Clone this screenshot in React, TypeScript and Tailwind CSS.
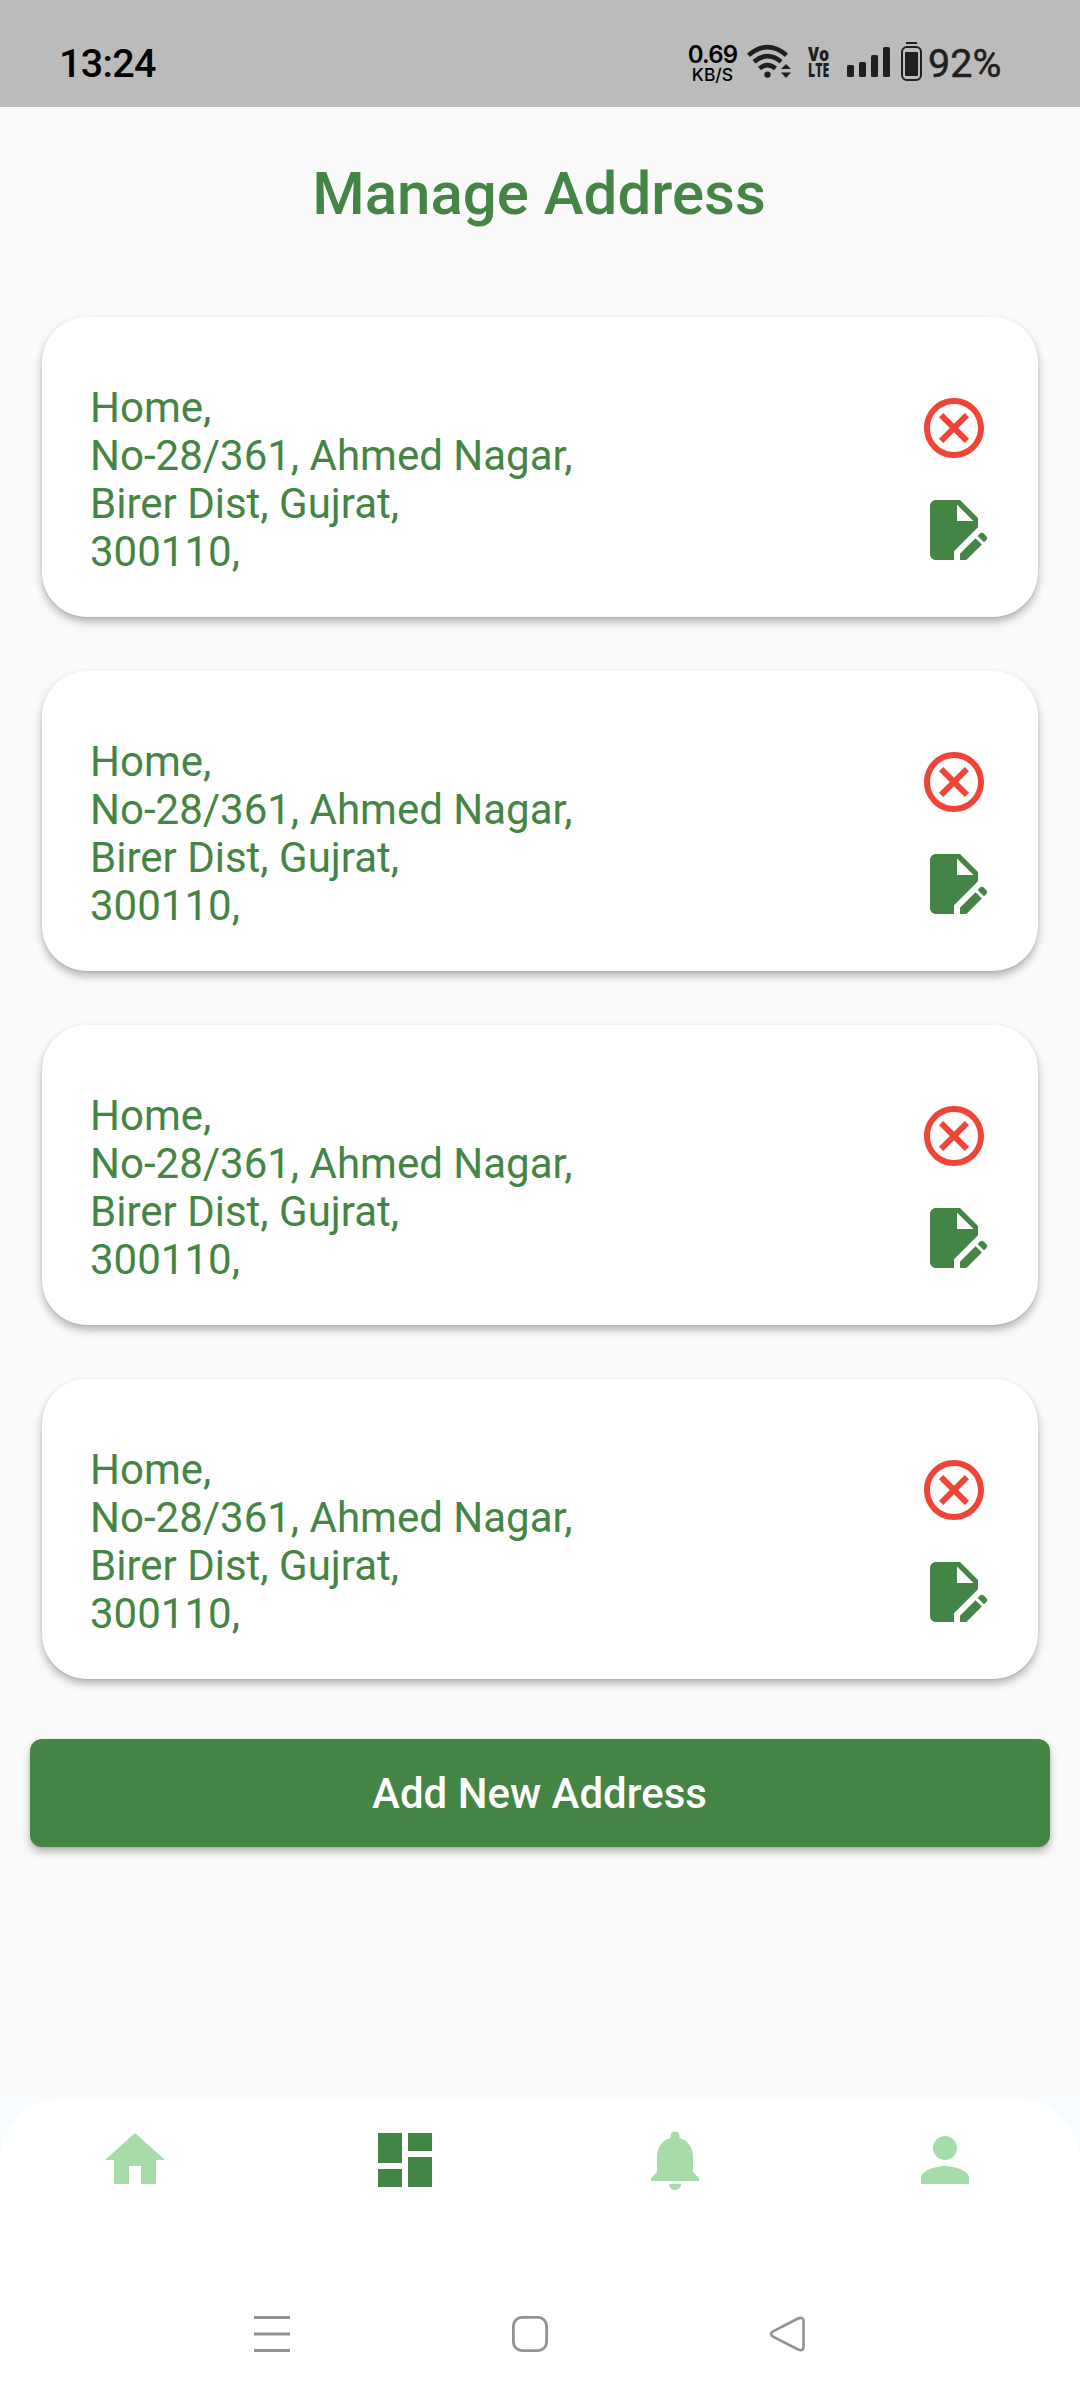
import React from "react";

const addresses = [1, 2, 3, 4].map((id) => ({
  id,
  lines: ["Home,", "No-28/361, Ahmed Nagar,", "Birer Dist, Gujrat,", "300110,"],
}));

function Icon({ d, className }: { d: string; className: string }) {
  return (
    <svg viewBox="0 0 24 24" className={`size-[72px] shrink-0 fill-current ${className}`} aria-hidden="true">
      <path d={d} />
    </svg>
  );
}

const paths = {
  cancel:
    "M12 2C6.47 2 2 6.47 2 12s4.47 10 10 10 10-4.47 10-10S17.53 2 12 2zm0 18c-4.41 0-8-3.59-8-8s3.59-8 8-8 8 3.59 8 8-3.59 8-8 8zm3.59-13L12 10.59 8.41 7 7 8.41 10.59 12 7 15.59 8.41 17 12 13.41 15.59 17 17 15.59 13.41 12 17 8.41 15.59 7z",
  editDocument:
    "M14 19.88V22h2.12l5.17-5.17-2.12-2.12L14 19.88zM20 8l-6-6H6c-1.1 0-2 .9-2 2v16c0 1.1.9 2 2 2h6v-2.95l8-8V8zm-7 1V3.5L18.5 9H13zM22.71 14l-.71-.71a1 1 0 0 0-1.41 0l-.71.71L22 16.12l.71-.71a1 1 0 0 0 0-1.41z",
  home: "M10 20v-6h4v6h5v-8h3L12 3 2 12h3v8z",
  dashboard: "M3 13h8V3H3v10zm0 8h8v-6H3v6zm10 0h8V11h-8v10zm0-18v6h8V3h-8z",
  bell: "M12 22c1.1 0 2-.9 2-2h-4c0 1.1.89 2 2 2zm6-6v-5c0-3.07-1.64-5.64-4.5-6.32V4c0-.83-.67-1.5-1.5-1.5s-1.5.67-1.5 1.5v.68C7.63 5.36 6 7.92 6 11v5l-2 2v1h16v-1l-2-2z",
  person:
    "M12 12c2.21 0 4-1.79 4-4s-1.79-4-4-4-4 1.79-4 4 1.79 4 4 4zm0 2c-2.67 0-8 1.34-8 4v2h16v-2c0-2.66-5.33-4-8-4z",
};

function StatusBar() {
  return (
    <header className="flex h-[107px] items-start bg-[#bbbbbb] pt-[39px] pl-[59px] text-black">
      <time className="mt-px w-[628px] text-[39.5px] leading-[48px] font-medium tracking-[-0.7px]">13:24</time>
      <div className="mt-[3px] flex w-[51px] flex-col items-center font-[Inter,sans-serif] font-semibold">
        <span className="text-[24px] leading-[25px] tracking-[-0.8px]">0.69</span>
        <span className="text-[17.5px] leading-[15px] font-medium">KB/S</span>
      </div>
      <svg viewBox="0 0 44 36" className="mt-[4px] ml-[9px] h-[36px] w-[44px]" fill="none" stroke="#1f1f1f" strokeWidth="4.6">
        <path d="M1.5 12.2Q20.5-4 39.5 12.2" />
        <path d="M7 18.8Q20.5 7.5 34 18.8" />
        <path d="M12.5 25.6Q20.5 18.6 28.5 25.6" />
        <circle cx="20.5" cy="31.6" r="3.2" fill="#1f1f1f" stroke="none" />
        <path d="M34 26l5-5 5 5zM34 29.5l5 5.5 5-5.5z" fill="#1f1f1f" stroke="none" />
      </svg>
      <div className="mt-[7px] ml-[17px] flex w-[23px] flex-col items-start font-['Open_Sans',sans-serif] text-[19.5px] leading-[16px] font-extrabold text-[#1f1f1f]">
        <span className="origin-left scale-x-[0.82]">Vo</span>
        <span className="origin-left scale-x-[0.63]">LTE</span>
      </div>
      <div className="mt-[8px] ml-[16px] flex h-[30px] items-end gap-[5.5px]">
        <i className="h-[12px] w-[6.5px] rounded-[1.5px] bg-[#1f1f1f]" />
        <i className="h-[15px] w-[6.5px] rounded-[1.5px] bg-[#1f1f1f]" />
        <i className="h-[22px] w-[6.5px] rounded-[1.5px] bg-[#1f1f1f]" />
        <i className="h-[30px] w-[6.5px] rounded-[1.5px] bg-[#1f1f1f]" />
      </div>
      <div className="mt-[3px] ml-[11.5px] flex w-[21px] flex-col items-center gap-[2px]">
        <i className="h-[2px] w-[11px] bg-[#1f1f1f]" />
        <div className="h-[35px] w-[21px] rounded-[6px] border-2 border-[#1f1f1f] p-[2px]">
          <i className="mt-[2px] block h-[24px] w-[13px] rounded-[1px] bg-[#1f1f1f]" />
        </div>
      </div>
      <span className="mt-px ml-[6px] text-[39.5px] leading-[48px] text-[#1f1f1f] [-webkit-text-stroke:0.5px_#1f1f1f]">92%</span>
    </header>
  );
}

function AddressCard({ lines }: { lines: string[] }) {
  return (
    <li className="flex h-[300px] justify-between rounded-[45px] bg-white px-[48px] pt-[67px] shadow-[0_5px_8px_rgba(0,0,0,0.28),0_1px_2px_rgba(0,0,0,0.08)]">
      <address className="text-[42px] leading-[48px] text-[#448444] not-italic">
        {lines.map((line) => (
          <div key={line}>{line}</div>
        ))}
      </address>
      <div className="mt-[8px] flex flex-col gap-[30px]">
        <button aria-label="Delete address" className="size-[72px]">
          <Icon d={paths.cancel} className="text-[#f04438]" />
        </button>
        <button aria-label="Edit address" className="size-[72px]">
          <Icon d={paths.editDocument} className="text-[#448444]" />
        </button>
      </div>
    </li>
  );
}

function SystemNavigation() {
  return (
    <div className="mt-[108px] flex gap-[198px] pl-[242px]">
      <svg viewBox="0 0 60 60" className="size-[60px]" stroke="#929292" strokeWidth="3">
        <path d="M12 13.5H48M12 30H48M12 46.5H48" />
      </svg>
      <svg viewBox="0 0 60 60" className="size-[60px]" fill="none" stroke="#929292" strokeWidth="2.8">
        <rect x="13.4" y="13.4" width="33.2" height="33.2" rx="8.5" />
      </svg>
      <svg viewBox="0 0 60 60" className="size-[60px]" fill="none" stroke="#929292" strokeWidth="2.6" strokeLinejoin="round">
        <path d="M40 14.5L15 27.3Q11 30 15 32.7L40 45.5Q45.5 47.5 45.5 43V17Q45.5 12.5 40 14.5Z" />
      </svg>
    </div>
  );
}

export default function App() {
  return (
    <div className="flex h-[2400px] w-[1080px] flex-col bg-[#fafafa] font-[Roboto,sans-serif]">
      <StatusBar />
      <main className="flex flex-1 flex-col pt-[52px]">
        <h1 className="pr-[2px] text-center text-[60px] leading-[70px] font-medium text-[#448444]">Manage Address</h1>
        <ul className="mt-[88px] flex flex-col gap-[54px] px-[42px]">
          {addresses.map((address) => (
            <AddressCard key={address.id} lines={address.lines} />
          ))}
        </ul>
        <button className="mx-[30px] mt-[60px] h-[108px] rounded-[12px] bg-[#448444] pt-[2px] pr-px text-[42px] leading-[48px] font-medium text-white shadow-[0_5px_8px_rgba(0,0,0,0.28),0_1px_2px_rgba(0,0,0,0.08)]">
          Add New Address
        </button>
      </main>
      <footer className="h-[300px] bg-[#f6fcff]">
        <div className="h-full rounded-t-[60px] bg-white pt-[24px]">
          <nav className="grid grid-cols-4 justify-items-center">
            <Icon d={paths.home} className="text-[#a6dca8]" />
            <Icon d={paths.dashboard} className="text-[#448444]" />
            <Icon d={paths.bell} className="text-[#a6dca8]" />
            <Icon d={paths.person} className="text-[#a6dca8]" />
          </nav>
          <SystemNavigation />
        </div>
      </footer>
    </div>
  );
}
